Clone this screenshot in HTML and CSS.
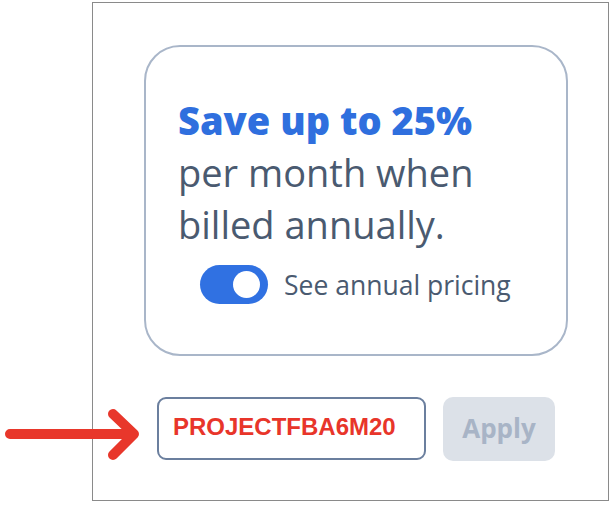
FILE: index.html
```html
<!DOCTYPE html>
<html lang="en">
<head>
    <title>Annual pricing promo</title>
    <link rel="stylesheet" href="styles.css">
</head>
<body>
    <div class="frame">
        <div class="promo">
            <p class="promo-text">
                <strong>Save up to 25%</strong><br>
                per month when<br>
                billed annually.
            </p>
            <label class="switch-row">
                <span class="switch"><span class="knob"></span></span>
                See annual pricing
            </label>
        </div>
        <div class="coupon">
            <div class="coupon-input">PROJECTFBA6M20</div>
            <button class="apply" disabled>Apply</button>
        </div>
    </div>

    <svg class="arrow" width="150" height="60" viewBox="0 0 150 60">
        <path d="M10 34 H132 M113 14 L134 34 L113 55" fill="none" stroke="#e8372b" stroke-width="10" stroke-linecap="round" stroke-linejoin="round"/>
    </svg>
</body>
</html>
```

FILE: styles.css
```css
body {
    margin: 0;
    background: #fff;
    font-family: "Open Sans", "Noto Sans", sans-serif;
}
.frame {
    box-sizing: border-box;
    width: 517px;
    height: 499px;
    margin: 2px 0 0 92px;
    border: 1px solid #8a8a8a;
    padding: 42px 0 0 51px;
}
.promo {
    box-sizing: border-box;
    width: 424px;
    height: 311px;
    border: 2px solid #a9b6c9;
    border-radius: 36px;
    padding: 47px 0 0 32px;
}
.promo-text {
    margin: 0;
    font-size: 38px;
    line-height: 52px;
    color: #4a5a70;
}
.promo-text strong {
    color: #2f6fde;
    font-weight: 800;
}
.switch-row {
    display: flex;
    align-items: center;
    gap: 16px;
    margin: 15px 0 0 22px;
    font-size: 26.5px;
    color: #4a5a70;
}
.switch {
    position: relative;
    width: 68px;
    height: 39px;
    border-radius: 20px;
    background: #3071e2;
}
.knob {
    position: absolute;
    right: 8px;
    top: 6px;
    width: 27px;
    height: 27px;
    border-radius: 50%;
    background: #fff;
}
.coupon {
    display: flex;
    gap: 17px;
    margin: 41px 0 0 13px;
}
.coupon-input {
    box-sizing: border-box;
    width: 269px;
    height: 63px;
    border: 2px solid #6b7f9e;
    border-radius: 9px;
    padding: 0 0 3px 14px;
    display: flex;
    align-items: center;
    font-family: "Liberation Sans", Arial, sans-serif;
    font-weight: bold;
    font-size: 24px;
    color: #e8352a;
}
.apply {
    width: 112px;
    height: 64px;
    padding-bottom: 3px;
    border: none;
    border-radius: 10px;
    background: #dce1e8;
    color: #a8b4c6;
    font-family: "Open Sans", "Noto Sans", sans-serif;
    font-weight: bold;
    font-size: 26px;
}
.arrow {
    position: absolute;
    left: 0;
    top: 400px;
}
```
